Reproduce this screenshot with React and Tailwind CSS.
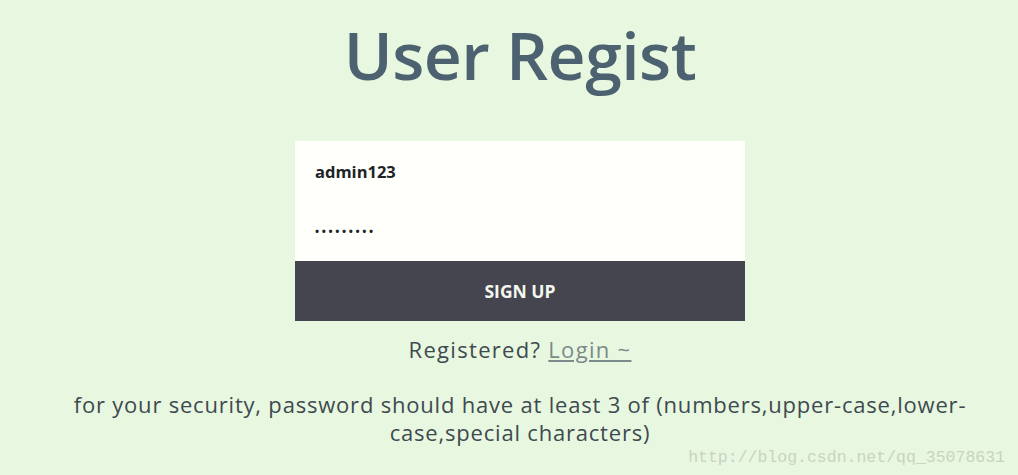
import React, { useState } from 'react';

export default function App() {
  const [username, setUsername] = useState('admin123');
  const [password, setPassword] = useState('123456789');

  return (
    <div className="relative w-full h-[475px] overflow-hidden bg-[#e8f7df] pl-[22px]" style={{ fontFamily: '"Open Sans", Lato, sans-serif' }}>
      <div className="flex flex-col items-center">
        <h1 className="mt-[9px] text-[66px] leading-[90px] font-semibold text-[#4d6270] tracking-[-0.5px]">User Regist</h1>

        <form className="mt-[42px] w-[450px] bg-[#fffffc] flex flex-col" onSubmit={e => e.preventDefault()}>
          <input
            type="text"
            className="h-[60px] px-[20px] bg-transparent outline-none text-[16.5px] font-bold text-[#1e2426]"
            value={username}
            onChange={e => setUsername(e.target.value)}
          />
          <input
            type="password"
            className="h-[60px] px-[20px] pb-[1px] bg-transparent outline-none text-[11px] font-bold text-[#1e2426] tracking-[2.6px]"
            value={password}
            onChange={e => setPassword(e.target.value)}
          />
          <button type="submit" className="h-[60px] bg-[#44454e] text-[#f4f8ef] text-[17.5px] font-bold">SIGN UP</button>
        </form>

        <p className="mt-[14px] text-[22px] leading-[28px] tracking-[1.3px] text-[#3e4a50]">
          Registered? <a href="#" className="text-[#7b8a8a] underline">Login ~</a>
        </p>

        <p className="mt-[27px] w-[905px] text-center text-[22px] leading-[28px] tracking-[0.8px] text-[#3e4a50]">
          for your security, password should have at least 3 of (numbers,upper-case,lower-case,special characters)
        </p>
      </div>

      <div className="absolute right-[13px] bottom-[8px] text-[16.5px] leading-[19px] text-[#c9d3c3]" style={{ fontFamily: '"Liberation Mono", monospace' }}>
        http://blog.csdn.net/qq_35078631
      </div>
    </div>
  );
}
